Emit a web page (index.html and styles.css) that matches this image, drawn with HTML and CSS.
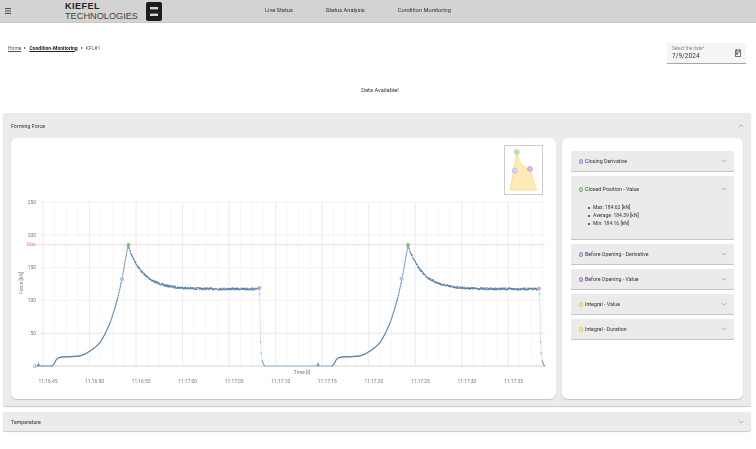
FILE: index.html
```html
<!DOCTYPE html>
<html>
<head lang="en">
    <meta charset="UTF-8">
    <title>Condition Monitoring</title>
    <link rel="stylesheet" href="styles.css">
</head>
<body>
<div class="page">
    <header class="topbar">
        <svg class="menu-icon" width="6" height="6" viewBox="0 0 6 6">
            <path d="M0 .6h6M0 3h6M0 5.4h6" stroke="#333" stroke-width=".9"/>
        </svg>
        <div class="logo">
            <div class="logo-text">
                <b>KIEFEL</b>
                <span>TECHNOLOGIES</span>
            </div>
            <svg width="16" height="19" viewBox="0 0 16 19">
                <rect width="16" height="19" rx="2" fill="#1c1c1c"/>
                <rect x="4" y="5" width="8" height="2.4" fill="#d3d3d3"/>
                <rect x="4" y="11.6" width="8" height="2.4" fill="#d3d3d3"/>
            </svg>
        </div>
        <nav class="nav">
            <a href="#">Live Status</a>
            <a href="#">Status Analysis</a>
            <a href="#">Condition Monitoring</a>
        </nav>
    </header>

    <div class="toolbar">
        <div class="crumbs">
            <a href="#">Home</a>
            <i></i>
            <a href="#" class="current">Condition-Monitoring</a>
            <i></i>
            <span>KFL#1</span>
        </div>
        <div class="date-field">
            <div>
                <label>Select the date*</label>
                <div class="date-value">7/9/2024</div>
            </div>
            <svg width="6" height="8" viewBox="0 0 6 8">
                <path d="M.4 1.2h5.2v6.4H.4zM.4 3h5.2M1.5.2v1.4M4.5.2v1.4" fill="none" stroke="#444" stroke-width=".8"/>
                <rect x="1.2" y="4" width="1.6" height="1.6" fill="#444"/>
            </svg>
        </div>
    </div>

    <p class="status">Data Available!</p>

    <section class="panel">
        <div class="panel-head">
            <span>Forming Force</span>
            <svg class="chev" width="6" height="4" viewBox="0 0 6 4"><path d="M.8 3 3 1l2.2 2" fill="none" stroke="#999" stroke-width=".7"/></svg>
        </div>
        <div class="panel-body">
            <div class="chart-card">
                <svg id="chart" class="chart" width="545" height="261" viewBox="11 138 545 261"></svg>
                <div class="thumb">
                    <svg width="37" height="48" viewBox="505 146 37 48">
                        <path d="M510 190 Q514 170 516.7 153 Q520 168 530 169 Q532 178 536.7 190Z" fill="#ffeab8" stroke="#ffd772" stroke-width=".7"/>
                        <circle cx="516.7" cy="152" r="2.5" fill="#bfe0b4" stroke="#8fc587" stroke-width=".5"/>
                        <circle cx="514.7" cy="170.7" r="2.5" fill="#c9daf5" stroke="#8fafe0" stroke-width=".5"/>
                        <circle cx="530" cy="169" r="2.5" fill="#d6c0e6" stroke="#a885c8" stroke-width=".5"/>
                    </svg>
                </div>
            </div>
            <div class="side-card">
                <div class="acc">
                    <div class="acc-head"><i class="dot blue"></i><span>Closing Derivative</span>
                        <svg class="chev" width="6" height="4" viewBox="0 0 6 4"><path d="M.8 1 3 3l2.2-2" fill="none" stroke="#999" stroke-width=".7"/></svg></div>
                </div>
                <div class="acc open">
                    <div class="acc-head"><i class="dot green"></i><span>Closed Position - Value</span>
                        <svg class="chev" width="6" height="4" viewBox="0 0 6 4"><path d="M.8 3 3 1l2.2 2" fill="none" stroke="#999" stroke-width=".7"/></svg></div>
                    <ul class="values">
                        <li>Max: 184.62 [kN]</li>
                        <li>Average: 184.39 [kN]</li>
                        <li>Min: 184.16 [kN]</li>
                    </ul>
                </div>
                <div class="acc">
                    <div class="acc-head"><i class="dot purple"></i><span>Before Opening - Derivative</span>
                        <svg class="chev" width="6" height="4" viewBox="0 0 6 4"><path d="M.8 1 3 3l2.2-2" fill="none" stroke="#999" stroke-width=".7"/></svg></div>
                </div>
                <div class="acc">
                    <div class="acc-head"><i class="dot purple"></i><span>Before Opening - Value</span>
                        <svg class="chev" width="6" height="4" viewBox="0 0 6 4"><path d="M.8 1 3 3l2.2-2" fill="none" stroke="#999" stroke-width=".7"/></svg></div>
                </div>
                <div class="acc">
                    <div class="acc-head"><i class="dot yellow"></i><span>Integral - Value</span>
                        <svg class="chev" width="6" height="4" viewBox="0 0 6 4"><path d="M.8 1 3 3l2.2-2" fill="none" stroke="#999" stroke-width=".7"/></svg></div>
                </div>
                <div class="acc">
                    <div class="acc-head"><i class="dot yellow"></i><span>Integral - Duration</span>
                        <svg class="chev" width="6" height="4" viewBox="0 0 6 4"><path d="M.8 1 3 3l2.2-2" fill="none" stroke="#999" stroke-width=".7"/></svg></div>
                </div>
            </div>
        </div>
    </section>

    <section class="panel closed">
        <div class="panel-head">
            <span>Temperature</span>
            <svg class="chev" width="6" height="4" viewBox="0 0 6 4"><path d="M.8 1 3 3l2.2-2" fill="none" stroke="#999" stroke-width=".7"/></svg>
        </div>
    </section>
</div>
<script src="script.js"></script>
</body>
</html>
```

FILE: styles.css
```css
* {
    margin: 0;
    padding: 0;
    box-sizing: border-box;
}

a {
    color: inherit;
}

ol, ul {
    list-style: none;
}

body {
    background: #fff;
    color: #333;
    font-family: Roboto, "Liberation Sans", sans-serif;
    font-size: 5.5px;
    overflow: hidden;
}

.page {
    height: 449px;
    filter: blur(.35px);
}

.topbar {
    height: 23px;
    background: #d3d3d3;
    border-bottom: 1px solid #c8c8c8;
    display: flex;
    align-items: center;
    padding-left: 5px;
}

.logo {
    display: flex;
    align-items: center;
    gap: 8px;
    margin-left: 54px;
    width: 200px;
}

.logo-text {
    display: flex;
    flex-direction: column;
    font-family: "Liberation Sans", sans-serif;
    color: #222;
}

.logo-text b {
    font-size: 9px;
    line-height: 9px;
    letter-spacing: .5px;
}

.logo-text span {
    font-size: 9.2px;
    line-height: 10px;
    color: #444;
}

.nav {
    display: flex;
    gap: 33px;
    font-size: 5.7px;
    margin-top: -3px;
}

.nav a {
    text-decoration: none;
}

.toolbar {
    display: flex;
    justify-content: space-between;
    align-items: flex-start;
    margin-top: 20px;
    padding: 0 10px 0 8px;
    height: 21px;
}

.crumbs {
    display: flex;
    align-items: center;
    gap: 3px;
    font-size: 5px;
    height: 9px;
    color: #555;
}

.crumbs .current {
    font-weight: 700;
    color: #222;
}

.crumbs i {
    border-left: 2px solid #444;
    border-top: 1.2px solid transparent;
    border-bottom: 1.2px solid transparent;
}

.date-field {
    width: 79px;
    height: 21px;
    background: #f5f5f5;
    border-bottom: 1px solid #a8a8a8;
    display: flex;
    justify-content: space-between;
    align-items: center;
    padding: 0 5px;
}

.date-field label {
    display: block;
    font-size: 4.6px;
    line-height: 7px;
    color: #888;
}

.date-value {
    font-size: 6.4px;
    line-height: 9px;
    letter-spacing: .1px;
}

.status {
    margin-top: 20px;
    margin-bottom: 17px;
    height: 12px;
    line-height: 12px;
    text-align: center;
    font-size: 5.7px;
    padding-left: 4px;
}

.panel {
    width: 748px;
    margin-left: 3px;
    background: #ebebeb;
    border-radius: 2px;
    box-shadow: 0 1px 1px #c9c9c9;
}

.panel.closed {
    margin-top: 6px;
}

.panel-head {
    height: 25px;
    display: flex;
    justify-content: space-between;
    align-items: center;
    padding: 0 7px 0 8px;
    font-size: 5.3px;
}

.panel.closed .panel-head {
    height: 19px;
}

.panel-body {
    display: flex;
    gap: 6px;
    padding: 0 8px 7px;
}

.chart-card,
.side-card {
    background: #fff;
    border-radius: 6px;
    box-shadow: 0 1px 1px #c4c4c4;
    height: 261px;
}

.chart-card {
    width: 545px;
    position: relative;
}

.chart {
    display: block;
}

.chart text {
    font-family: Roboto, "Liberation Sans", sans-serif;
    font-size: 4.9px;
    fill: #777;
}

.thumb {
    position: absolute;
    left: 493px;
    top: 7px;
    width: 39px;
    height: 50px;
    background: #fff;
    border: 1px solid #ccc;
}

.thumb svg {
    display: block;
}

.side-card {
    width: 181px;
    padding: 13px 9px;
    display: flex;
    flex-direction: column;
    gap: 5px;
}

.acc {
    background: #ebebeb;
    border-radius: 1px;
    box-shadow: 0 1px 0 #c4c4c4;
    min-height: 20px;
}

.acc.open {
    height: 63px;
}

.acc-head {
    height: 20px;
    display: flex;
    align-items: center;
    padding: 0 7px 0 8px;
    font-size: 5.3px;
}

.acc.open .acc-head {
    height: 26px;
}

.acc-head span {
    flex: 1;
    margin-left: 2px;
}

.dot {
    width: 4px;
    height: 5px;
    border-radius: 50%;
    border: 1.2px solid;
}

.dot.blue { border-color: #7f96e6; background: #c4d0f4; }
.dot.green { border-color: #6fb565; background: #c4e2bf; }
.dot.purple { border-color: #a875cf; background: #dcc8ec; }
.dot.yellow { border-color: #eec440; background: #faeab8; }

.values {
    padding-left: 17px;
    font-size: 5px;
    line-height: 8px;
    margin-top: 1px;
}

.values li::before {
    content: "";
    display: inline-block;
    width: 2px;
    height: 2px;
    border-radius: 50%;
    background: #333;
    margin-right: 3px;
    vertical-align: middle;
}
```

FILE: script.js
```js
var svg = document.getElementById("chart");
var NS = "http://www.w3.org/2000/svg";

function add(tag, attrs, text) {
    var el = document.createElementNS(NS, tag);
    for (var k in attrs) {
        el.setAttribute(k, attrs[k]);
    }
    if (text) {
        el.textContent = text;
    }
    svg.appendChild(el);
    return el;
}

var left = 43, right = 545, base = 366;

// vertical grid
for (var x = 43; x <= right; x += 11.62) {
    add("line", {x1: x, x2: x, y1: 202, y2: base, stroke: "#f1f1f1", "stroke-width": .6});
}
var labels = ["11:16:45", "11:16:50", "11:16:55", "11:17:00", "11:17:05", "11:17:10", "11:17:15", "11:17:20", "11:17:25", "11:17:30", "11:17:35"];
for (var i = 0; i < labels.length; i++) {
    var mx = 43 + 46.55 * i;
    add("line", {x1: mx, x2: mx, y1: 202, y2: base, stroke: "#e6e6e6", "stroke-width": .6});
    add("text", {x: mx + 5, y: 383, "text-anchor": "middle"}, labels[i]);
}

// horizontal grid
for (var v = 0; v <= 250; v += 50) {
    var gy = base - v * .656;
    add("line", {x1: left - 3, x2: right, y1: gy, y2: gy, stroke: v == 0 ? "#c4c4c4" : (v == 50 ? "#ddd" : "#ececec"), "stroke-width": .7});
    add("text", {x: 36, y: gy + 1.8, "text-anchor": "end"}, String(v));
}

add("text", {x: 302, y: 374, "text-anchor": "middle"}, "Time [t]");
add("text", {x: 0, y: 0, "text-anchor": "middle", transform: "translate(23 283) rotate(-90)"}, "Force [kN]");

// max line
add("line", {x1: 37, x2: right, y1: 244.6, y2: 244.6, stroke: "#ffa3a3", "stroke-width": .7, "stroke-dasharray": "1 .8"});
add("text", {x: 36, y: 246.4, "text-anchor": "end", style: "fill:#f08080"}, "Max");

var rise = [[52, 366], [54, 364], [56, 360], [58, 358], [62, 357], [70, 356.8], [80, 356], [85, 354], [90, 351], [95, 347.5], [100, 342.5], [105, 334], [110, 323], [114, 311], [118, 297], [122, 279], [125, 262], [128, 245.5]];

function curve(x) {
    if (x < 52) return 366;
    if (x <= 128) {
        for (var i = 1; i < rise.length; i++) {
            if (x <= rise[i][0]) {
                var a = rise[i - 1], b = rise[i];
                return a[1] + (b[1] - a[1]) * (x - a[0]) / (b[0] - a[0]);
            }
        }
    }
    return 289 - 43.5 * Math.exp(-(x - 128) / 15);
}

var seed = 7;
function noise() {
    seed = (seed * 16807) % 2147483647;
    return seed / 2147483647 - .5;
}

var pts = [], line = [];
function dot(x, y) {
    pts.push("M" + x.toFixed(2) + " " + y.toFixed(2) + "h.01");
}

function cycle(off) {
    for (var x = 52; x < 259.5; x += .33) {
        var y = curve(x);
        if (x > 128) y += noise() * 2;
        dot(x + off, y);
        line.push((x + off).toFixed(1) + "," + y.toFixed(1));
    }
    var fall = [[259.7, 294], [260.6, 342], [261.2, 353], [262.2, 361], [262.7, 362], [263.2, 363.5], [263.8, 365], [264.4, 365.6]];
    for (var j = 0; j < fall.length; j++) {
        dot(fall[j][0] + off, fall[j][1]);
        line.push((fall[j][0] + off).toFixed(1) + "," + fall[j][1]);
    }
    line.push((265 + off) + ",366");
}

function bump(x) {
    dot(x - 1, 365.5);
    dot(x - .5, 364.5);
    dot(x, 363);
    dot(x + .5, 364.5);
    dot(x + 1, 365.5);
}

cycle(0);
line.push("317,366", "318,363", "319,366");
cycle(280);
bump(38.5);
bump(318);

// flat part on the zero line
add("line", {x1: 36, x2: 52, y1: 366, y2: 366, stroke: "#5b82ad", "stroke-width": .9});
add("line", {x1: 264, x2: 332, y1: 366, y2: 366, stroke: "#5b82ad", "stroke-width": .5});

add("polyline", {points: line.join(" "), fill: "none", stroke: "#b5d4ea", "stroke-width": .6});
add("path", {d: pts.join(""), stroke: "#5a80ab", "stroke-width": 1.25, "stroke-linecap": "round", fill: "none"});

var marks = [[122, 279, "#a9c2ee"], [128.5, 245, "#7cc478"], [259.5, 288, "#c8a4dc"], [401.5, 278.5, "#a9c2ee"], [408, 245, "#7cc478"], [539, 288.5, "#c8a4dc"]];
for (var m = 0; m < marks.length; m++) {
    add("circle", {cx: marks[m][0], cy: marks[m][1], r: 2, fill: marks[m][2]});
}
```
